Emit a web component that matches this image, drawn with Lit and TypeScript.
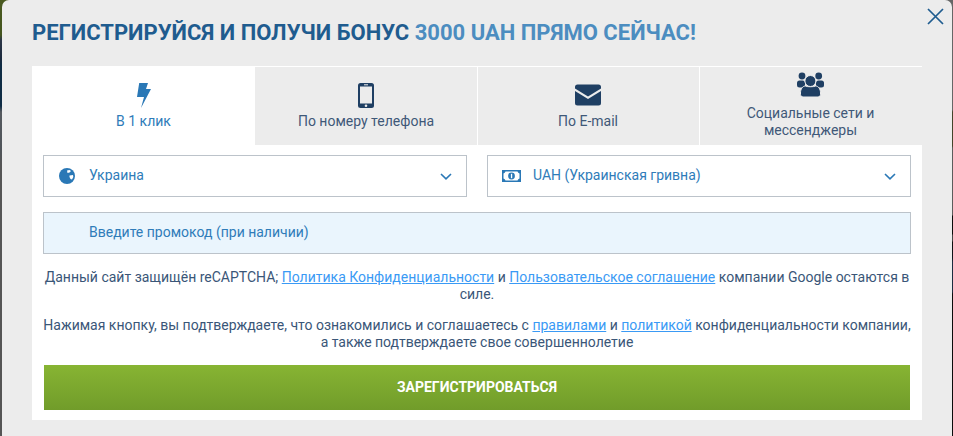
import { LitElement, html, css } from "lit";
import { customElement } from "lit/decorators.js";

@customElement("app-root")
export class AppRoot extends LitElement {
  static styles = css`
    :host {
      display: block;
      width: 953px;
      height: 436px;
      overflow: hidden;
      font-family: Roboto, "Liberation Sans", sans-serif;
      background:
        linear-gradient(180deg, #4a5a20 0, #44551f 35px, #2c3648 40px, #1c2a3e 58px, #0f2c45 65px, #0f2c45 106px, #565a60 112px, #50555a 150px, #555 165px, #555 100%) 0 0 / 50% 100% no-repeat,
        linear-gradient(180deg, #666 0, #666 110px, #44442a 112px, #44442a 146px, #5c5c5c 148px, #5c5c5c 215px, #0c0c0c 216px, #0c0c0c 234px, #444 235px, #444 241px, #0e0e0e 242px, #10141c 258px, #1c2c40 262px, #1c2c40 292px, #0c0c0c 294px, #0c0c0c 100%) 100% 0 / 50% 100% no-repeat;
    }
    .modal {
      position: relative;
      box-sizing: border-box;
      width: 950px;
      height: 436px;
      margin-left: 2px;
      padding: 0 30px;
      background: #ececec;
      border-radius: 7px 7px 0 0;
    }
    h1 {
      margin: 0;
      height: 66px;
      box-sizing: border-box;
      padding-top: 19px;
      font-size: 22px;
      line-height: 28px;
      font-weight: 700;
      color: #1f5c8f;
      white-space: nowrap;
    }
    h1 span { color: #4c8dc0; }
    .close {
      position: absolute;
      top: 8px;
      right: 8px;
      width: 17px;
      height: 17px;
      display: block;
    }
    .panel {
      width: 890px;
      height: 354px;
      background: #fff;
      padding-top: 1px;
      box-sizing: border-box;
    }
    .tabs {
      display: grid;
      grid-template-columns: 222px 222px 221px 222px;
      gap: 1px;
      height: 78px;
      background: #fff;
    }
    .tab {
      display: flex;
      flex-direction: column;
      align-items: center;
      justify-content: center;
      gap: 5px;
      background: #ececec;
      color: #3f5878;
      font-size: 14px;
      line-height: 17px;
      text-align: center;
      box-sizing: border-box;
    }
    .tab.active { background: #fff; color: #2f7cb9; padding-left: 1px; }
    .tab.mail { padding-right: 1px; }
    .tab.two { gap: 8px; padding: 0 1px 1px 0; }
    .tab svg { display: block; height: 25px; }
    .body { padding: 10px 11px 0 11px; }
    .row { display: flex; gap: 20px; }
    .select {
      flex: 0 0 424px;
      box-sizing: border-box;
      height: 42px;
      border: 1px solid #bcc3ca;
      display: flex;
      align-items: center;
      color: #2f7cb9;
      font-size: 14px;
    }
    .ico { width: 45px; display: flex; justify-content: center; padding-left: 1px; box-sizing: border-box; }
    .ico svg { display: block; }
    .grow { flex: 1; padding-bottom: 2px; }
    .chev { margin-right: 14px; display: block; }
    .promo {
      box-sizing: border-box;
      margin-top: 15px;
      width: 868px;
      height: 42px;
      border: 1px solid #bcc3ca;
      background: #eaf5fd;
      padding: 0 0 2px 45px;
      display: flex;
      align-items: center;
      color: #2f7cb9;
      font-size: 14px;
    }
    p {
      margin: 0;
      width: 868px;
      text-align: center;
      font-size: 14px;
      line-height: 16.5px;
      color: #3a5678;
    }
    p.a { margin-top: 15px; }
    p.b { margin-top: 15px; }
    a { color: #3a9af5; text-decoration: underline; }
    .btn {
      margin: 15px 0 0 1px;
      width: 866px;
      height: 45px;
      display: flex;
      align-items: center;
      justify-content: center;
      background: linear-gradient(180deg, #87b433, #719c2a);
      color: #fff;
      font-size: 14px;
      font-weight: 700;
      box-sizing: border-box;
      padding-bottom: 2px;
    }
  `;

  render() {
    return html`
      <div class="modal">
        <h1>РЕГИСТРИРУЙСЯ И ПОЛУЧИ БОНУС <span>3000 UAH ПРЯМО СЕЙЧАС!</span></h1>
        <svg class="close" viewBox="0 0 17 17" fill="none" stroke="#1f5c8f" stroke-width="1.7">
          <path d="M1 1 16 16M16 1 1 16" />
        </svg>
        <div class="panel">
          <div class="tabs">
            <div class="tab active">
              <svg width="14" viewBox="0 0 14 25" fill="#2a78b6"><path d="M2.200 0H11L9 6h5L4 25l3-11H0z" /></svg>
              <span>В 1 клик</span>
            </div>
            <div class="tab">
              <svg width="16" viewBox="0 0 16 25">
                <rect width="16" height="25" rx="2.500" fill="#1f3f63" />
                <rect x="2" y="3.500" width="12" height="17" fill="#ececec" />
                <rect x="6" y="1.300" width="4" height="1" fill="#ececec" />
                <circle cx="8" cy="22.700" r="1.300" fill="#ececec" />
              </svg>
              <span>По номеру телефона</span>
            </div>
            <div class="tab mail">
              <svg width="26" viewBox="0 0 26 25">
                <path fill="#1f3f63" d="M0 4A2.500 2.500 0 0 1 2.500 1.500h21A2.500 2.500 0 0 1 26 4v1.500L13 13.500 0 5.500z" />
                <path fill="#1f3f63" d="M0 8v12a2.500 2.500 0 0 0 2.500 2.500h21A2.500 2.500 0 0 0 26 20V8l-13 8z" />
              </svg>
              <span>По E-mail</span>
            </div>
            <div class="tab two">
              <svg width="27" viewBox="0 0 27 25" fill="#1f3f63">
                <circle cx="5" cy="4" r="3.400" />
                <circle cx="21.700" cy="4" r="3.400" />
                <rect x="0" y="8.500" width="8" height="7" rx="2.500" />
                <rect x="19" y="8.500" width="8" height="7" rx="2.500" />
                <circle cx="13.400" cy="9" r="5.500" stroke="#ececec" />
                <path stroke="#ececec" d="M3.500 21c0-4 2-7 5-7 1.500 1 8.500 1 10 0 3 0 5 3 5 7v1.500a2.500 2.500 0 0 1-2.500 2.500H6a2.500 2.500 0 0 1-2.500-2.500z" />
              </svg>
              <span>Социальные сети и<br />мессенджеры</span>
            </div>
          </div>
          <div class="body">
            <div class="row">
              <div class="select">
                <div class="ico">
                  <svg width="16" height="16" viewBox="0 0 16 16">
                    <circle cx="8" cy="8" r="8" fill="#2a78b6" />
                    <path fill="#fff" d="M8 2.500 10.500 2l1.500 1-1.500 1.500-2 .6zM10.500 7.500l3.500-.5.300 2-1.300 2.500-1.500-.5-1-2z" />
                  </svg>
                </div>
                <span class="grow">Украина</span>
                <svg class="chev" width="12" height="7" viewBox="0 0 12 7" fill="none" stroke="#2a78b6" stroke-width="1.600"><path d="M1 1l5 4.800L11 1" /></svg>
              </div>
              <div class="select">
                <div class="ico">
                  <svg width="19" height="12" viewBox="0 0 19 12">
                    <rect width="19" height="12" fill="#2a78b6" />
                    <path fill="#fff" d="M3.500 1.500h12q.5 1.500 2 2v5q-1.500.5-2 2h-12q-.5-1.500-2-2v-5q1.500-.5 2-2z" />
                    <circle cx="9.500" cy="6" r="3.400" fill="#2a78b6" />
                    <rect x="8.900" y="3.800" width="1.300" height="4.400" fill="#fff" />
                  </svg>
                </div>
                <span class="grow">UAH (Украинская гривна)</span>
                <svg class="chev" width="12" height="7" viewBox="0 0 12 7" fill="none" stroke="#2a78b6" stroke-width="1.600"><path d="M1 1l5 4.800L11 1" /></svg>
              </div>
            </div>
            <div class="promo">Введите промокод (при наличии)</div>
            <p class="a">Данный сайт защищён reCAPTCHA; <a>Политика Конфиденциальности</a> и <a>Пользовательское соглашение</a> компании Google остаются в силе.</p>
            <p class="b">Нажимая кнопку, вы подтверждаете, что ознакомились и соглашаетесь с <a>правилами</a> и <a>политикой</a> конфиденциальности компании, а также подтверждаете свое совершеннолетие</p>
            <div class="btn">ЗАРЕГИСТРИРОВАТЬСЯ</div>
          </div>
        </div>
      </div>
    `;
  }
}
